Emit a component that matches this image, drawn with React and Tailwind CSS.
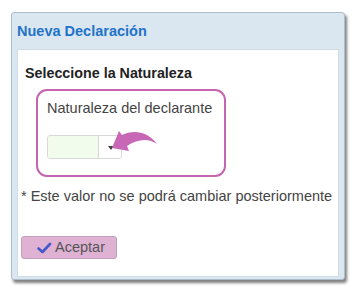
export default function App() {
  return (
    <div className="w-[357px] h-[294px] bg-white pl-[11px] pt-[12px]" style={{ fontFamily: "'Liberation Sans', Arial, sans-serif" }}>
      <div className="w-[334px] h-[268px] bg-[#dae6f0] border border-[#aebdca] rounded-[3px] shadow-[2px_3px_3px_rgba(0,0,0,0.5)] flex flex-col">
        <div className="h-[36px] flex items-center pl-[5px] pt-[1px]">
          <span className="text-[14.5px] font-bold text-[#1f73c9] leading-[17px]">Nueva Declaración</span>
        </div>
        <div className="flex-1 mx-[5px] mb-[2px] bg-white border border-[#d0dce6] flex flex-col relative">
          <div className="pl-[7px] pt-[15px] text-[14.3px] leading-[17px] font-bold text-[#222]">Seleccione la Naturaleza</div>
          <div className="ml-[18px] mt-[7px] w-[190px] h-[88px] border-2 border-[#c565b1] rounded-[11px] pl-[9px] pt-[9px]">
            <div className="text-[14.5px] text-[#444] leading-[17px]">Naturaleza del declarante</div>
            <div className="mt-[18px] flex w-[75px] h-[24px] border border-[#d8d8d8] rounded-[3px] overflow-hidden">
              <div className="w-[51px] bg-[#f1fcec] border-r border-[#d8d8d8]" />
              <div className="flex-1 bg-white flex items-center justify-center pt-[2px] pl-[2px]">
                <div className="w-0 h-0 border-l-[3px] border-r-[3px] border-t-[4px] border-l-transparent border-r-transparent border-t-[#444]" />
              </div>
            </div>
          </div>
          <svg className="absolute left-0 top-0" width="323" height="130" viewBox="0 0 323 130">
            <g transform="translate(-18,-50)">
              <path
                d="M112 148 L119 131 L122 135 C132 130 147 130 157 144 C148 138 138 139 127 146 L129 151 Z"
                fill="#c867b5"
              />
            </g>
          </svg>
          <div className="pl-[3px] mt-[11px] text-[14.5px] leading-[17px] text-[#444]">* Este valor no se podrá cambiar posteriormente</div>
          <div className="pl-[3px] mt-[31px]">
            <button className="w-[96px] h-[23px] bg-[#dfb2d4] border border-[#bfa2b8] rounded-[3px] flex items-center pl-[15px] gap-[3px] text-[14.5px] text-[#555]">
              <svg width="15" height="12" viewBox="0 0 15 12">
                <path d="M1.5 6.5 L5.5 10 L13 2" fill="none" stroke="#4359c7" strokeWidth="2.6" strokeLinecap="round" strokeLinejoin="round" />
              </svg>
              Aceptar
            </button>
          </div>
        </div>
      </div>
    </div>
  );
}
